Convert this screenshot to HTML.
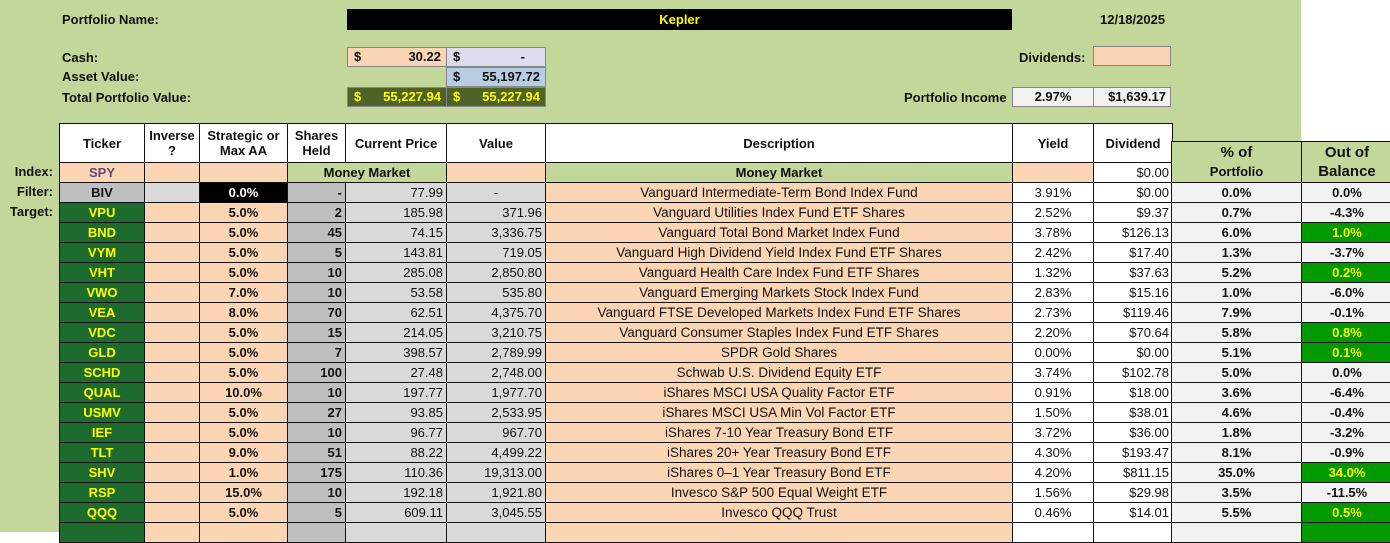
<!DOCTYPE html>
<html><head><meta charset="utf-8"><style>
*{margin:0;padding:0;box-sizing:border-box}
body{width:1390px;height:532px;overflow:hidden;background:#fff;font-family:"Liberation Sans",Arial,sans-serif;font-size:13px;color:#111;position:relative}
.bg{position:absolute;left:0;top:0;width:1301px;height:141px;background:#c4d79b}
.lcol{position:absolute;left:0;top:141px;width:1171px;height:391px;background:#c4d79b}
.ab{position:absolute;font-weight:bold;white-space:nowrap}
.box{position:absolute;height:20px;border:1px solid #888;line-height:18px;font-size:13px;font-weight:bold}
table{position:absolute;border-collapse:collapse;table-layout:fixed}
td{border:1px solid #111;height:20px;padding:0 3px;white-space:nowrap;overflow:hidden;line-height:18px;text-align:center}
.h td{background:#fff;font-weight:bold;font-size:13px;line-height:15px;height:39px}
.t{background:#1e6b30;color:#ffff00;font-weight:bold}
.p{background:#fcd5b4}
.s{background:#fcd5b4;font-weight:bold}
.g{background:#bfbfbf;font-weight:bold;text-align:right}
.n{background:#d9d9d9;text-align:right;font-stretch:condensed}
.d{background:#fcd5b4;font-size:13.5px}
.w{background:#fff}
.wr{background:#fff;text-align:right}
.lab{position:absolute;left:0;width:53px;text-align:right;font-weight:bold;font-size:13px}
.r td{font-weight:bold;background:#f2f2f2}
.r td.gg{background:#009900;color:#ffff00}
</style></head><body>
<div class="bg"></div><div class="lcol"></div>
<div class="ab" style="left:62px;top:12px">Portfolio Name:</div>
<div style="position:absolute;left:347px;top:9px;width:665px;height:21px;background:#000;color:#ffff00;font-weight:bold;text-align:center;line-height:21px">Kepler</div>
<div class="ab" style="left:1100px;top:12px">12/18/2025</div>
<div class="ab" style="left:62px;top:50px">Cash:</div>
<div class="ab" style="left:62px;top:69px">Asset Value:</div>
<div class="ab" style="left:62px;top:90px">Total Portfolio Value:</div>
<div class="box" style="left:347px;top:47px;width:100px;background:#fcd5b4"><span style="position:absolute;left:6px">$</span><span style="position:absolute;right:5px">30.22</span></div>
<div class="box" style="left:446px;top:47px;width:100px;background:#dcdcef"><span style="position:absolute;left:6px">$</span><span style="position:absolute;right:20px">-</span></div>
<div class="box" style="left:446px;top:67px;width:100px;background:#b8cce4"><span style="position:absolute;left:6px">$</span><span style="position:absolute;right:5px">55,197.72</span></div>
<div class="box" style="left:347px;top:87px;width:100px;background:#4f6228;color:#ffff00"><span style="position:absolute;left:6px">$</span><span style="position:absolute;right:5px">55,227.94</span></div>
<div class="box" style="left:446px;top:87px;width:100px;background:#4f6228;color:#ffff00"><span style="position:absolute;left:6px">$</span><span style="position:absolute;right:5px">55,227.94</span></div>
<div class="ab" style="left:1019px;top:50px">Dividends:</div>
<div class="box" style="left:1093px;top:46px;width:78px;background:#fcd5b4"></div>
<div class="ab" style="left:904px;top:90px">Portfolio Income</div>
<div class="box" style="left:1012px;top:87px;width:82px;background:#f2f2f2;text-align:center">2.97%</div>
<div class="box" style="left:1093px;top:87px;width:78px;background:#f2f2f2;text-align:right;padding-right:4px">$1,639.17</div>

<div class="lab" style="top:164px">Index:</div>
<div class="lab" style="top:184px">Filter:</div>
<div class="lab" style="top:204px">Target:</div>

<table style="left:59px;top:123px;width:1113px">
<col style="width:85px"><col style="width:55px"><col style="width:88px"><col style="width:58px"><col style="width:101px"><col style="width:99px"><col style="width:467px"><col style="width:81px"><col style="width:79px">
<tr class="h"><td>Ticker</td><td>Inverse<br>?</td><td>Strategic or<br>Max AA</td><td>Shares<br>Held</td><td>Current Price</td><td>Value</td><td>Description</td><td>Yield</td><td>Dividend</td></tr>
<tr><td class="s" style="color:#604a7b">SPY</td><td class="p"></td><td class="p"></td><td colspan="2" style="background:#c4d79b;font-weight:bold">Money Market</td><td class="p"></td><td style="background:#c4d79b;font-weight:bold">Money Market</td><td class="p"></td><td class="wr">$0.00</td></tr>
<tr><td style="background:#bfbfbf;font-weight:bold">BIV</td><td style="background:#d9d9d9"></td><td style="background:#000;color:#fff;font-weight:bold">0.0%</td><td class="g">-</td><td class="n">77.99</td><td class="n" style="text-align:center">-</td><td class="d">Vanguard Intermediate-Term Bond Index Fund</td><td class="w">3.91%</td><td class="wr">$0.00</td></tr>
<tr><td class="t">VPU</td><td class="p"></td><td class="s">5.0%</td><td class="g">2</td><td class="n">185.98</td><td class="n">371.96</td><td class="d">Vanguard Utilities Index Fund ETF Shares</td><td class="w">2.52%</td><td class="wr">$9.37</td></tr>
<tr><td class="t">BND</td><td class="p"></td><td class="s">5.0%</td><td class="g">45</td><td class="n">74.15</td><td class="n">3,336.75</td><td class="d">Vanguard Total Bond Market Index Fund</td><td class="w">3.78%</td><td class="wr">$126.13</td></tr>
<tr><td class="t">VYM</td><td class="p"></td><td class="s">5.0%</td><td class="g">5</td><td class="n">143.81</td><td class="n">719.05</td><td class="d">Vanguard High Dividend Yield Index Fund ETF Shares</td><td class="w">2.42%</td><td class="wr">$17.40</td></tr>
<tr><td class="t">VHT</td><td class="p"></td><td class="s">5.0%</td><td class="g">10</td><td class="n">285.08</td><td class="n">2,850.80</td><td class="d">Vanguard Health Care Index Fund ETF Shares</td><td class="w">1.32%</td><td class="wr">$37.63</td></tr>
<tr><td class="t">VWO</td><td class="p"></td><td class="s">7.0%</td><td class="g">10</td><td class="n">53.58</td><td class="n">535.80</td><td class="d">Vanguard Emerging Markets Stock Index Fund</td><td class="w">2.83%</td><td class="wr">$15.16</td></tr>
<tr><td class="t">VEA</td><td class="p"></td><td class="s">8.0%</td><td class="g">70</td><td class="n">62.51</td><td class="n">4,375.70</td><td class="d">Vanguard FTSE Developed Markets Index Fund ETF Shares</td><td class="w">2.73%</td><td class="wr">$119.46</td></tr>
<tr><td class="t">VDC</td><td class="p"></td><td class="s">5.0%</td><td class="g">15</td><td class="n">214.05</td><td class="n">3,210.75</td><td class="d">Vanguard Consumer Staples Index Fund ETF Shares</td><td class="w">2.20%</td><td class="wr">$70.64</td></tr>
<tr><td class="t">GLD</td><td class="p"></td><td class="s">5.0%</td><td class="g">7</td><td class="n">398.57</td><td class="n">2,789.99</td><td class="d">SPDR Gold Shares</td><td class="w">0.00%</td><td class="wr">$0.00</td></tr>
<tr><td class="t">SCHD</td><td class="p"></td><td class="s">5.0%</td><td class="g">100</td><td class="n">27.48</td><td class="n">2,748.00</td><td class="d">Schwab U.S. Dividend Equity ETF</td><td class="w">3.74%</td><td class="wr">$102.78</td></tr>
<tr><td class="t">QUAL</td><td class="p"></td><td class="s">10.0%</td><td class="g">10</td><td class="n">197.77</td><td class="n">1,977.70</td><td class="d">iShares MSCI USA Quality Factor ETF</td><td class="w">0.91%</td><td class="wr">$18.00</td></tr>
<tr><td class="t">USMV</td><td class="p"></td><td class="s">5.0%</td><td class="g">27</td><td class="n">93.85</td><td class="n">2,533.95</td><td class="d">iShares MSCI USA Min Vol Factor ETF</td><td class="w">1.50%</td><td class="wr">$38.01</td></tr>
<tr><td class="t">IEF</td><td class="p"></td><td class="s">5.0%</td><td class="g">10</td><td class="n">96.77</td><td class="n">967.70</td><td class="d">iShares 7-10 Year Treasury Bond ETF</td><td class="w">3.72%</td><td class="wr">$36.00</td></tr>
<tr><td class="t">TLT</td><td class="p"></td><td class="s">9.0%</td><td class="g">51</td><td class="n">88.22</td><td class="n">4,499.22</td><td class="d">iShares 20+ Year Treasury Bond ETF</td><td class="w">4.30%</td><td class="wr">$193.47</td></tr>
<tr><td class="t">SHV</td><td class="p"></td><td class="s">1.0%</td><td class="g">175</td><td class="n">110.36</td><td class="n">19,313.00</td><td class="d">iShares 0–1 Year Treasury Bond ETF</td><td class="w">4.20%</td><td class="wr">$811.15</td></tr>
<tr><td class="t">RSP</td><td class="p"></td><td class="s">15.0%</td><td class="g">10</td><td class="n">192.18</td><td class="n">1,921.80</td><td class="d">Invesco S&amp;P 500 Equal Weight ETF</td><td class="w">1.56%</td><td class="wr">$29.98</td></tr>
<tr><td class="t">QQQ</td><td class="p"></td><td class="s">5.0%</td><td class="g">5</td><td class="n">609.11</td><td class="n">3,045.55</td><td class="d">Invesco QQQ Trust</td><td class="w">0.46%</td><td class="wr">$14.01</td></tr>
<tr><td class="t"></td><td class="p"></td><td class="s"></td><td class="g"></td><td class="n"></td><td class="n"></td><td class="d"></td><td class="w"></td><td class="w"></td></tr>
</table>

<table class="r" style="left:1171px;top:141px;width:221px">
<col style="width:130px"><col style="width:91px">
<tr><td style="background:#c4d79b;height:41px;font-size:15px;line-height:19px">% of<br><span style="font-size:13px">Portfolio</span></td><td style="background:#c4d79b;height:41px;font-size:15px;line-height:19px">Out of<br>Balance</td></tr>
<tr><td>0.0%</td><td>0.0%</td></tr>
<tr><td>0.7%</td><td>-4.3%</td></tr>
<tr><td>6.0%</td><td class="gg">1.0%</td></tr>
<tr><td>1.3%</td><td>-3.7%</td></tr>
<tr><td>5.2%</td><td class="gg">0.2%</td></tr>
<tr><td>1.0%</td><td>-6.0%</td></tr>
<tr><td>7.9%</td><td>-0.1%</td></tr>
<tr><td>5.8%</td><td class="gg">0.8%</td></tr>
<tr><td>5.1%</td><td class="gg">0.1%</td></tr>
<tr><td>5.0%</td><td>0.0%</td></tr>
<tr><td>3.6%</td><td>-6.4%</td></tr>
<tr><td>4.6%</td><td>-0.4%</td></tr>
<tr><td>1.8%</td><td>-3.2%</td></tr>
<tr><td>8.1%</td><td>-0.9%</td></tr>
<tr><td>35.0%</td><td class="gg">34.0%</td></tr>
<tr><td>3.5%</td><td>-11.5%</td></tr>
<tr><td>5.5%</td><td class="gg">0.5%</td></tr>
<tr><td></td><td class="gg"></td></tr>
</table>
</body></html>
